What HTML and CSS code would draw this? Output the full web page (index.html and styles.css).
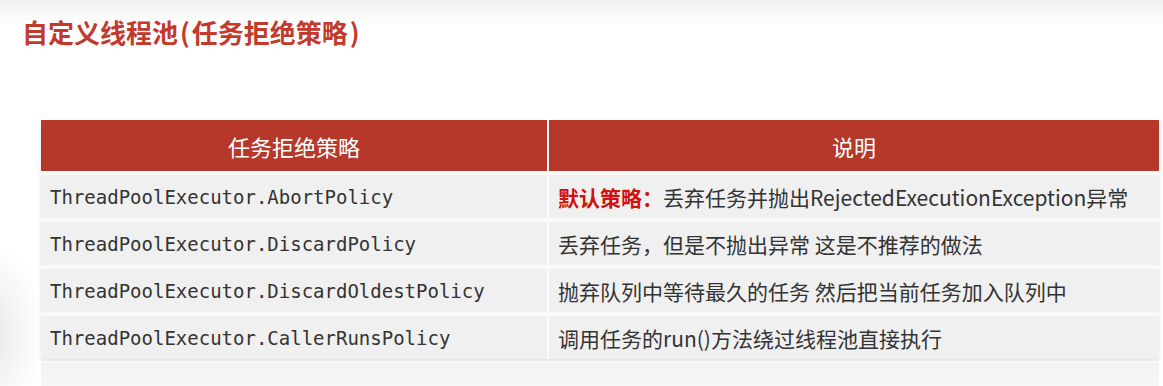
FILE: index.html
```html
<!DOCTYPE html>
<html lang="zh-CN">
<head>
<meta charset="utf-8">
<title>自定义线程池（任务拒绝策略）</title>
<link rel="stylesheet" href="styles.css">
</head>
<body>
<div class="slide">
  <div class="blob"></div>
  <h1 class="title">自定义线程池<span class="paren">(</span>任务拒绝策略<span class="paren">)</span></h1>
  <div class="table">
    <div class="th">任务拒绝策略</div>
    <div class="th">说明</div>

    <div class="td code">ThreadPoolExecutor.AbortPolicy</div>
    <div class="td desc"><span class="em">默认策略：</span>丢弃任务并抛出RejectedExecutionException异常</div>

    <div class="td code">ThreadPoolExecutor.DiscardPolicy</div>
    <div class="td desc">丢弃任务，但是不抛出异常 这是不推荐的做法</div>

    <div class="td code">ThreadPoolExecutor.DiscardOldestPolicy</div>
    <div class="td desc">抛弃队列中等待最久的任务 然后把当前任务加入队列中</div>

    <div class="td code">ThreadPoolExecutor.CallerRunsPolicy</div>
    <div class="td desc">调用任务的run()方法绕过线程池直接执行</div>
  </div>
  <div class="footer"></div>
</div>
</body>
</html>
```

FILE: styles.css
```css
html, body {
  margin: 0;
  padding: 0;
  background: #ffffff;
}

.slide {
  position: relative;
  width: 1163px;
  height: 386px;
  overflow: hidden;
  background: linear-gradient(to bottom, #efefef 0px, #fbfbfb 16px, #ffffff 26px, #ffffff 100%);
  font-family: "Noto Sans CJK SC", "Noto Sans", sans-serif;
}

.blob {
  position: absolute;
  left: -55px;
  top: 240px;
  width: 100px;
  height: 170px;
  background: radial-gradient(ellipse at 40% 55%, rgba(170,170,170,0.3) 0%, rgba(200,200,200,0.15) 45%, rgba(255,255,255,0) 70%);
}

.title {
  margin: 0;
  padding: 14px 0 0 22px;
  height: 120px;
  box-sizing: border-box;
  font-size: 26px;
  line-height: 36px;
  font-weight: 700;
  color: #c23a2c;
}

.paren {
  margin: 0 2px;
}

.table {
  position: relative;
  margin-left: 41px;
  width: 1118px;
  display: grid;
  grid-template-columns: 506px 610px;
  grid-template-rows: 51px 43px 43px 43px 43px;
  column-gap: 2px;
  row-gap: 4px;
  box-shadow: 0 2px 3px rgba(0,0,0,0.12);
  background: #fafafa;
}

.th {
  background: #b5382a;
  color: #ffffff;
  font-size: 22px;
  display: flex;
  align-items: center;
  justify-content: center;
}

.td {
  background: #f0f0f0;
  display: flex;
  align-items: center;
  color: #333333;
}

.code {
  padding-left: 9px;
  font-family: "DejaVu Sans Mono", "Liberation Mono", monospace;
  font-size: 19px;
  color: #333333;
}

.desc {
  padding-left: 9px;
  font-family: "Noto Sans CJK SC", sans-serif;
  font-size: 21px;
}

.em {
  color: #d0120f;
  font-weight: 700;
}

.footer {
  margin-left: 41px;
  margin-top: 4px;
  width: 1118px;
  height: 40px;
  background: linear-gradient(to bottom, #f3f3f3, #f8f8f8);
}
```
